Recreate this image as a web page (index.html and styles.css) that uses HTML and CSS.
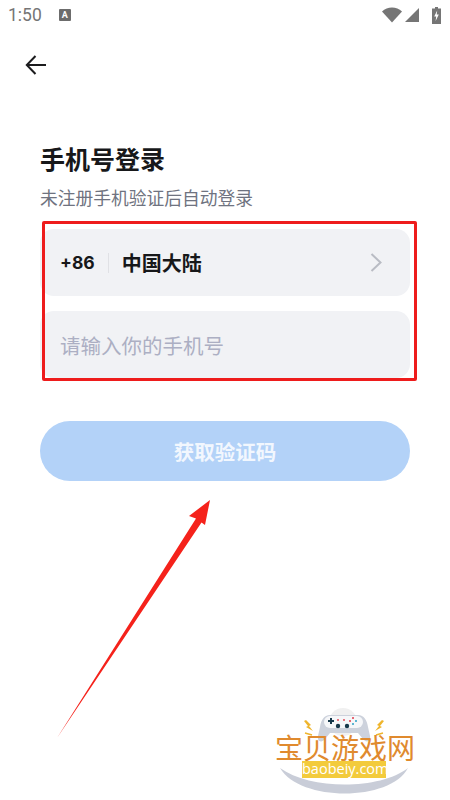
FILE: index.html
```html
<!DOCTYPE html>
<html>
<head>
	<meta charset="utf-8">
	<title>手机号登录</title>
	<link rel="stylesheet" href="styles.css">
</head>
<body>
	<div class="phone">
		<div class="status-bar">
			<div class="status-left">
				<span class="status-time">1:50</span>
				<span class="status-badge">A</span>
			</div>
			<div class="status-icons">
				<svg class="icon-wifi" width="20" height="16" viewBox="0 0 20 16"><path d="M0 4.5C2.8 1.8 6.2.5 10 .5s7.200 1.300 10 4L10 15.500z" fill="#757575"/></svg>
				<svg class="icon-signal" width="14" height="14" viewBox="0 0 14 14"><path d="M14 0v14H0z" fill="#757575"/></svg>
				<svg class="icon-battery" width="9" height="17" viewBox="0 0 9 17"><path d="M3 0h3v1.500h3V17H0V1.500h3z" fill="#757575"/><path d="M5.200 3.500 2.200 9.500h2l-.6 4.500 3.200-6.500H4.700z" fill="#fff"/></svg>
			</div>
		</div>
		<div class="nav-bar">
			<svg width="22" height="20" viewBox="0 0 22 20"><path d="M21 10H2M10.500 1 1.800 10l8.700 9" fill="none" stroke="#1c1c1e" stroke-width="2"/></svg>
		</div>
		<div class="login">
			<h1 class="login-title">手机号登录</h1>
			<p class="login-sub">未注册手机验证后自动登录</p>
			<div class="field field-region">
				<span class="region-code">+86</span>
				<span class="region-line"></span>
				<span class="region-name">中国大陆</span>
				<svg class="region-arrow" width="12" height="19" viewBox="0 0 12 19"><path d="M1.500 1 10.500 9.500 1.500 18" fill="none" stroke="#b9bcc4" stroke-width="2"/></svg>
			</div>
			<div class="field field-phone">请输入你的手机号</div>
			<div class="login-btn">获取验证码</div>
		</div>

		<!-- annotations on top of the screenshot -->
		<div class="mark-box"></div>
		<svg class="mark-arrow" width="450" height="800" viewBox="0 0 450 800"><path d="M57 738 196 518.500 189 516 210 500 205 525 201.500 522.500z" fill="#f5221b"/></svg>

		<div class="watermark">
			<svg class="wm-art" width="170" height="110" viewBox="0 0 170 110">
				<path d="M20 78C50 100 120 100 148 78 130 112 40 112 20 78z" fill="#c9cdd8"/>
				<circle cx="83" cy="32" r="14" fill="#f0f0f0"/>
				<path d="M70 25h28c6 0 9 5 10 12l2 9c1 6-4 7-7 3l-5-6H70l-5 6c-3 4-8 3-7-3l2-9c1-7 4-12 10-12z" fill="#cdd2dc"/>
				<rect x="64" y="26" width="39" height="12" rx="6" fill="#f6f7f9"/>
				<path d="M70 28h2v2h2v2h-2v2h-2v-2h-2v-2h2z" fill="#16384a"/>
				<circle cx="93" cy="28" r="1" fill="#e23a4a"/><circle cx="96" cy="31" r="1" fill="#2a9fc4"/><circle cx="90" cy="31" r="1" fill="#e23a4a"/><circle cx="93" cy="34" r="1" fill="#2a9fc4"/>
				<circle cx="78" cy="30" r=".9" fill="#e23a4a"/><circle cx="84" cy="30" r=".9" fill="#e23a4a"/>
				<circle cx="78" cy="36" r="2.200" fill="#16384a"/><circle cx="87" cy="36" r="2.200" fill="#16384a"/>
				<path d="M46 30l5 5-2 1 4 5-7-4 2-1-4-5zM122 30l-5 5 2 1-4 5 7-4-2-1 4-5z" fill="#efb52c"/>
				<path d="M45 43l7 2M123 43l-7 2" stroke="#efb52c" stroke-width="1.500"/>
			</svg>
			<div class="wm-name">宝贝游戏网</div>
			<div class="wm-url">baobeiy.com</div>
		</div>
	</div>
</body>
</html>
```

FILE: styles.css
```css
* {
	margin: 0;
	padding: 0;
	box-sizing: border-box;
}
body {
	font-family: "Noto Sans CJK SC", "Noto Sans", sans-serif;
	background-color: #fff;
}
.phone {
	position: relative;
	width: 450px;
	height: 800px;
	overflow: hidden;
}
.status-bar {
	display: flex;
	justify-content: space-between;
	align-items: center;
	height: 30px;
	padding: 0 9px 0 8px;
}
.status-left {
	display: flex;
	align-items: center;
	gap: 17px;
}
.status-time {
	font-family: Roboto, sans-serif;
	font-size: 17.500px;
	color: #757575;
}
.status-badge {
	width: 12px;
	height: 12px;
	border-radius: 1px;
	background-color: #6c6c6c;
	font-family: Roboto, sans-serif;
	font-size: 9px;
	font-weight: 700;
	line-height: 12px;
	text-align: center;
	color: #fff;
}
.status-icons {
	display: flex;
	align-items: center;
	gap: 3px;
}
.icon-battery {
	margin-left: 10px;
}
.nav-bar {
	display: flex;
	align-items: center;
	height: 70px;
	padding-left: 25px;
}
.login {
	padding: 42px 40px 0;
}
.login-title {
	font-size: 25px;
	font-weight: 700;
	line-height: 32px;
	color: #17181a;
}
.login-sub {
	margin-top: 10px;
	font-size: 17.750px;
	line-height: 26px;
	color: #6f7380;
}
.field {
	display: flex;
	align-items: center;
	height: 67px;
	border-radius: 14px;
	background-color: #f1f2f5;
}
.field-region {
	margin-top: 19px;
	padding: 0 28px 0 20px;
}
.region-code {
	font-family: Inter, Roboto, sans-serif;
	font-size: 17.500px;
	font-weight: 700;
	color: #17181a;
}
.region-line {
	width: 1px;
	height: 20px;
	margin: 0 13px;
	background-color: #e0e1e5;
}
.region-name {
	flex: 1;
	font-size: 20px;
	font-weight: 700;
	color: #17181a;
}
.field-phone {
	margin-top: 15px;
	padding: 1px 0 0 20px;
	font-size: 20.500px;
	color: #acafc3;
}
.login-btn {
	height: 60px;
	margin-top: 43px;
	border-radius: 30px;
	background-color: #b3d2f8;
	font-size: 20.500px;
	font-weight: 700;
	line-height: 60px;
	text-align: center;
	color: #f2f7fe;
}
.mark-box {
	position: absolute;
	top: 221px;
	left: 42px;
	width: 375px;
	height: 160px;
	border: 3px solid #ee1c1c;
	border-radius: 2px;
}
.mark-arrow {
	position: absolute;
	top: 0;
	left: 0;
}
.watermark {
	position: absolute;
	top: 690px;
	left: 260px;
	width: 170px;
	height: 110px;
}
.wm-art {
	position: absolute;
	top: 0;
	left: 0;
}
.wm-name {
	position: absolute;
	top: 44px;
	left: 15px;
	font-size: 28px;
	line-height: 26px;
	white-space: nowrap;
	color: #e08a2e;
}
.wm-url {
	position: absolute;
	top: 71px;
	left: 42px;
	width: 84px;
	height: 17px;
	background-color: #f3cb3c;
	font-family: "Open Sans", sans-serif;
	font-size: 14.500px;
	line-height: 16px;
	white-space: nowrap;
	text-align: center;
	color: #fff;
}
```
